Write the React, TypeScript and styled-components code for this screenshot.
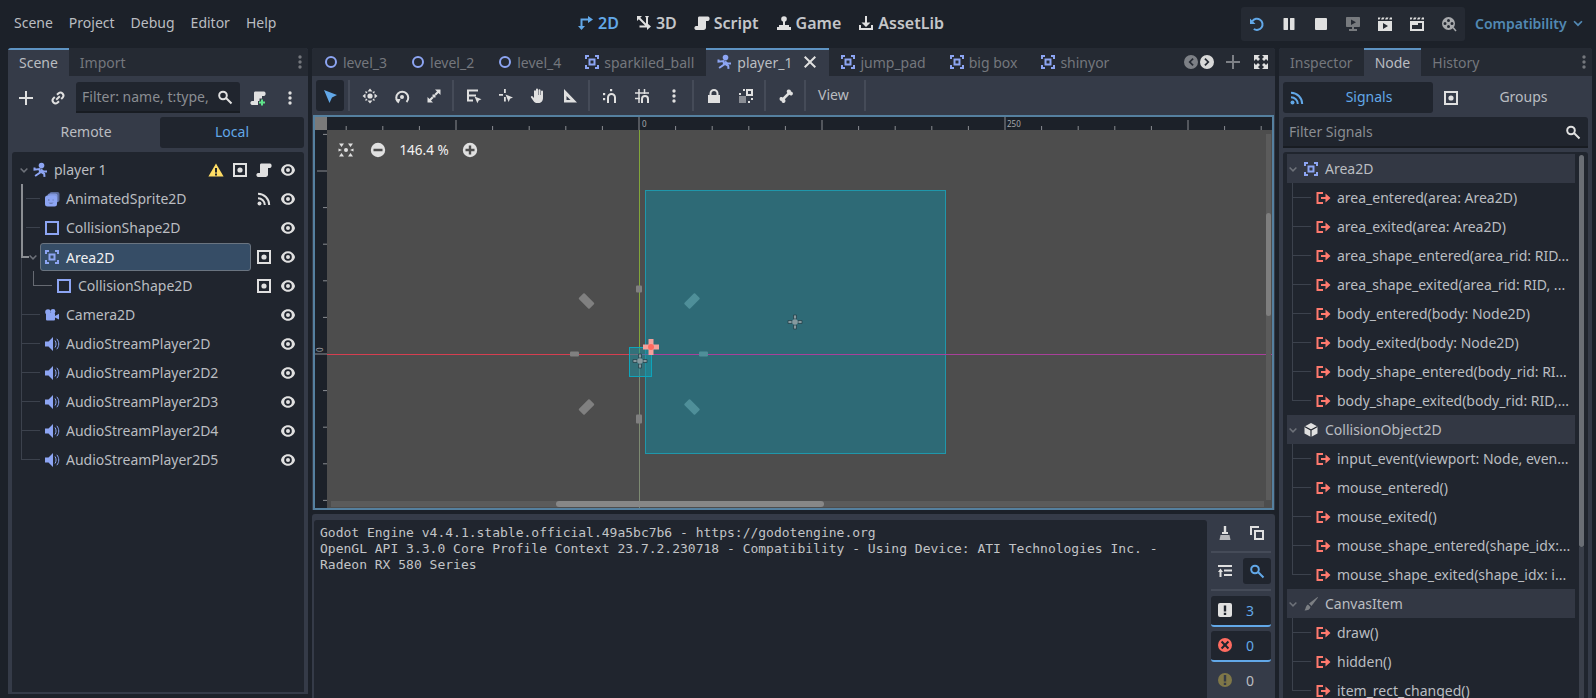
import * as React from 'react'
import styled, { createGlobalStyle } from 'styled-components'

const colors = {
  bg: '#1c2129',
  panel: '#353b48',
  tabBar: '#252a33',
  well: '#20252e',
  text: '#babdc1',
  textDim: '#74777d',
  accent: '#62a8e8',
  node: '#8da5f3',
  signal: '#ff7a6e',
  icon: '#e0e0e0',
}

const GlobalStyle = createGlobalStyle`
  html, body {
    margin: 0;
    padding: 0;
    background: ${colors.bg};
  }
  body {
    font-family: "Noto Sans", "Open Sans", sans-serif;
    font-size: 14px;
    color: ${colors.text};
  }
`

// ---- icons -------------------------------------------------------------

const glyphs: Record<string, React.ReactNode> = {
  eye: (
    <>
      <path fillRule="evenodd" d="M8 2.2C4.4 2.2 1.6 4.8 1 8c.6 3.2 3.4 5.8 7 5.8s6.4-2.6 7-5.8c-.6-3.2-3.4-5.8-7-5.8zm0 2a3.8 3.8 0 1 1 0 7.6 3.8 3.8 0 0 1 0-7.6z" />
      <circle cx="8" cy="8" r="2" />
    </>
  ),
  group: (
    <>
      <path fillRule="evenodd" d="M1 1h14v14H1zM3 3v10h10V3z" />
      <circle cx="8" cy="8" r="2.6" />
    </>
  ),
  script: <path d="M5.5 1.5H14c1 0 1.6 1 1.6 2.2S15 6 14 6h-2v6.5c0 1.5-1 2.5-2.5 2.5H2c-1 0-1.6-.9-1.6-1.9S1 11 2 11h2V3c0-1 .5-1.5 1.5-1.5z" />,
  scriptAdd: (
    <>
      <path d="M5.5 1.5H14c1 0 1.6 1 1.6 2.2S15 6 14 6h-2v2.5H9.5V11H8v4H2c-1 0-1.6-.9-1.6-1.9S1 11 2 11h2V3c0-1 .5-1.5 1.5-1.5z" />
      <path fill="#5fe38a" d="M11 9.5h2v2h2v2h-2v2h-2v-2H9v-2h2z" />
    </>
  ),
  warning: (
    <>
      <path fill="#ffdd65" d="M8 1.5 15.6 14.6H.4z" />
      <path fill="#20252e" d="M7 6h2v4.5H7zM7 11.4h2v2H7z" />
    </>
  ),
  player: (
    <>
      <circle cx="9.5" cy="3.6" r="2.8" />
      <path fill="none" stroke="currentColor" strokeWidth="2" d="M2.5 5.5v2.2L7.5 7l.6 3.5-5 3.5M8.2 9.5l4 2.3.3 3M9 7.5l2.5 2H15" />
    </>
  ),
  sprite: (
    <>
      <rect x="5.5" y="1" width="10" height="10" rx="2" opacity="0.55" />
      <rect x="3.5" y="2.5" width="10" height="10" rx="2" opacity="0.75" />
      <path fillRule="evenodd" d="M3.5 4.5h7a2.5 2.5 0 0 1 2.5 2.5v6a2.5 2.5 0 0 1-2.5 2.5h-7A2.5 2.5 0 0 1 1 13V7a2.5 2.5 0 0 1 2.5-2.5zM4 8v2h1.6V8zM8.4 8v2H10V8zM4.4 11.5c.6 1.4 4.6 1.4 5.2 0z" />
    </>
  ),
  camera: (
    <>
      <circle cx="4" cy="5" r="2.8" />
      <circle cx="9" cy="4.4" r="2.4" />
      <rect x="2" y="6" width="9" height="7.5" rx="1" />
      <path d="M11 9l4-2.2v5.6L11 10.6z" />
    </>
  ),
  speaker: (
    <>
      <path d="M1 5.5h3.5L9 1v14l-4.500-4.500H1z" />
      <path fill="none" stroke="currentColor" strokeWidth="1" d="M11 4.500c1.400 2 1.400 5 0 7M12.800 2.800c2.600 3 2.600 7.400 0 10.400" />
    </>
  ),
  area: <path fillRule="evenodd" d="M1 1h4v2H3v2H1zM11 1h4v4h-2V3h-2zM1 11h2v2h2v2H1zM13 11h2v4h-4v-2h2zM4.5 4.5h7v7h-7zM6.5 6.5v3h3v-3z" />,
  shape: <path fillRule="evenodd" d="M1 1h14v14H1zM3 3v10h10V3z" />,
  ring: <path fillRule="evenodd" d="M8 2a6 6 0 1 1 0 12A6 6 0 0 1 8 2zm0 2a4 4 0 1 0 0 8 4 4 0 0 0 0-8z" />,
  plus: <path d="M7 1h2v6h6v2H9v6H7V9H1V7h6z" />,
  close: <path d="M3.4 2 8 6.6 12.6 2 14 3.4 9.4 8l4.6 4.6-1.400 1.400L8 9.400 3.400 14 2 12.600 6.600 8 2 3.400z" />,
  link: <path fill="none" stroke="currentColor" strokeWidth="2" d="M6.200 9.800l3.600-3.600M7 4.800l1.600-1.600a3 3 0 0 1 4.200 4.200L11.200 9M9 11.200l-1.600 1.600a3 3 0 0 1-4.200-4.200L4.800 7" />,
  dots: (
    <>
      <circle cx="8" cy="3" r="1.700" />
      <circle cx="8" cy="8" r="1.700" />
      <circle cx="8" cy="13" r="1.700" />
    </>
  ),
  search: <path fill="none" stroke="currentColor" strokeWidth="2" d="M9.800 6.500a3.800 3.800 0 1 1-7.600 0 3.800 3.800 0 0 1 7.600 0zM9.500 9.500l5 5" />,
  chevron: <path fill="none" stroke="currentColor" strokeWidth="2" d="M3.500 6 8 10.500 12.500 6" />,
  rss: (
    <>
      <circle cx="3.500" cy="12.500" r="2" />
      <path fill="none" stroke="currentColor" strokeWidth="2" d="M2 7.200a6.800 6.800 0 0 1 6.800 6.800M2 2.800A11.200 11.200 0 0 1 13.200 14" />
    </>
  ),
  out: <path d="M1.500 2h6.500v2H3.500v8H8v2H1.500zM6 7h4.500V3.500L15.500 8l-5 4.500V9H6z" />,
  cube: (
    <>
      <path d="M8 1l6.500 3.500v7L8 15l-6.500-3.500v-7z" />
      <path fill="none" stroke="#20252e" strokeWidth="1.200" d="M1.500 4.500 8 8l6.500-3.500M8 8v7" />
    </>
  ),
  brush: (
    <>
      <path d="M14.500 1 15 1.500 8.500 10 6 7.500z" />
      <path d="M5 8.500 7.500 11c-.5 2.500-2.500 3.500-6 3.500 1.500-1.500 1-5 3.500-6z" />
    </>
  ),
  twoD: (
    <>
      <path fill="none" stroke="currentColor" strokeWidth="2" d="M3.500 12V4.500H11" />
      <path d="M10 1l5 3.500L10 8zM0 11h7l-3.500 4z" />
    </>
  ),
  threeD: (
    <>
      <path fill="none" stroke="currentColor" strokeWidth="2" d="M3 3l8.500 8.500M11 3v9M3.500 11.500H12" />
      <path d="M1 1h5L1 6zM15 11.500 11 15V8zM9 1h4l-2 3.500z" />
    </>
  ),
  game: (
    <>
      <circle cx="8" cy="4" r="2.800" />
      <path d="M7 5h2v5.500H7zM3 10h10v2H3zM1 12h14v3H1z" />
    </>
  ),
  asset: <path d="M7 1h2v6.500h3.500L8 12 3.500 7.500H7zM1 10h2v3h10v-3h2v5H1z" />,
  reload: (
    <>
      <path fill="none" stroke="currentColor" strokeWidth="2" d="M4.800 13a5.600 5.600 0 1 0-1.500-7.800" />
      <path d="M1 2.500v5.500h5.500z" />
    </>
  ),
  pause: <path d="M3 2h3.500c.300 0 .5.200.5.5v11c0 .300-.2.5-.5.5H3c-.3 0-.5-.2-.5-.5v-11c0-.3.200-.5.500-.5zM9.500 2H13c.300 0 .5.200.5.5v11c0 .300-.2.5-.5.5H9.500c-.3 0-.5-.2-.5-.5v-11c0-.3.200-.5.500-.5z" />,
  stop: <rect x="2" y="2" width="12" height="12" rx="1" />,
  monitor: <path fillRule="evenodd" d="M2 1h12c.6 0 1 .4 1 1v8c0 .6-.4 1-1 1H9v2h3v2H4v-2h3v-2H2c-.6 0-1-.4-1-1V2c0-.6.400-1 1-1zm4 2.500v5.500l5-2.700z" />,
  clapPlay: <path fillRule="evenodd" d="M1 1.500h2.500l-1 2H1zM5 1.500h2.500l-1 2H4zM9 1.500h2.500l-1 2H8zM13 1.500h2v2h-2.800zM1 5h14v10H1zm5 2v6l5-3z" />,
  clap: <path fillRule="evenodd" d="M1 1.500h2.500l-1 2H1zM5 1.500h2.500l-1 2H4zM9 1.500h2.500l-1 2H8zM13 1.500h2v2h-2.800zM1 5h14v10H1zm2 2v6h10V7H9v2H3z" />,
  reel: (
    <>
      <path fillRule="evenodd" d="M7.500 1a6.500 6.500 0 1 1 0 13 6.500 6.500 0 0 1 0-13zM7.500 3a1.500 1.500 0 1 0 0 3 1.500 1.500 0 0 0 0-3zM4 6a1.500 1.500 0 1 0 0 3 1.500 1.500 0 0 0 0-3zM11 6a1.500 1.500 0 1 0 0 3 1.500 1.500 0 0 0 0-3zM7.500 9a1.500 1.500 0 1 0 0 3 1.500 1.500 0 0 0 0-3z" />
      <path fill="none" stroke="currentColor" strokeWidth="1.500" d="M12 11.500l3 3.500" />
    </>
  ),
  select: <path d="M2 2l13 5-5 2.500L7.500 15z" />,
  move: (
    <>
      <circle cx="8" cy="8" r="2.600" />
      <path d="M8 .5 10.500 3.500h-5zM8 15.500 5.500 12.500h5zM.5 8l3-2.500v5zM15.500 8l-3 2.500v-5z" />
      <path fill="none" stroke="currentColor" strokeWidth="1.400" d="M3.500 3.500l1.500 1.500M12.500 3.500 11 5M3.500 12.500 5 11M12.500 12.500 11 11" />
    </>
  ),
  rotate: (
    <>
      <path fill="none" stroke="currentColor" strokeWidth="2" d="M4 14a6 6 0 1 1 8.500 0" />
      <circle cx="8" cy="9" r="2" />
      <path d="M1.500 11h5l-2 4.500z" />
    </>
  ),
  scale: (
    <>
      <path d="M9 1.500h5.500V7l-2-2L10 7.500 8.500 6 11 3.500zM7 14.500H1.500V9l2 2L6 8.500 7.500 10 5 12.500z" />
      <rect x="6.500" y="6.500" width="3" height="3" />
    </>
  ),
  listSelect: (
    <>
      <path d="M1 1.500h11v2H3v3h7v2H3v3h4v2H1z" />
      <path d="M8.500 8.500l7 2.800-2.800 1.200-1.300 2.800z" />
    </>
  ),
  pick: (
    <>
      <path d="M1 6h4v1.800H1zM6 1h1.800v4H6zM6 9h1.800v4.500H6z" />
      <path d="M7.500 6.500l7.500 3-3 1.300-1.300 3.200z" />
    </>
  ),
  hand: <path d="M6 1.500a1 1 0 0 1 2 0V7h.5V2.200a1 1 0 0 1 2 0V7h.5V3.500a1 1 0 0 1 2 0V10c0 3-2 5-4.500 5H7c-1.500 0-2.500-.6-3.500-2L1 9.500c-.6-.9.800-2 1.600-1L4 10V3.200a1 1 0 0 1 2 0z" />,
  ruler: <path fillRule="evenodd" d="M2 1l13 13.500H2zM4.500 8v4h4z" />,
  snap: (
    <>
      <path fill="none" stroke="currentColor" strokeWidth="2" d="M6 15V9.500a3.500 3.500 0 0 1 7 0V15" />
      <rect x="1" y="5" width="2.200" height="2.200" />
      <rect x="1" y="10" width="2.200" height="2.200" />
      <rect x="8" y="1" width="2.200" height="2.200" />
    </>
  ),
  grid: (
    <>
      <path fill="none" stroke="currentColor" strokeWidth="1.500" d="M1 5h14M1 10.500h5M5 1v14M10.500 1v5" />
      <path fill="none" stroke="currentColor" strokeWidth="2" d="M8 15v-4a3 3 0 0 1 6 0v4" />
    </>
  ),
  lock: <path fillRule="evenodd" d="M8 1a4.500 4.500 0 0 1 4.500 4.500V7H14v8H2V7h1.500V5.500A4.500 4.500 0 0 1 8 1zm0 2a2.500 2.500 0 0 0-2.500 2.500V7h5V5.500A2.500 2.500 0 0 0 8 3z" />,
  checker: (
    <>
      <path d="M1 8h7v7H1z" opacity="0.5" />
      <path d="M8 1h7v7H8zm2 2v3h3V3z" fillRule="evenodd" />
      <path d="M1 5h2v2H1zM5 1h2v2H5zM10 13h2v2h-2zM13 10h2v2h-2z" />
    </>
  ),
  bone: <path d="M11 1.500a2 2 0 0 1 2 2 2 2 0 0 1 1 3.700c-.9.500-2 .3-2.700-.4L6.800 11.300c.7.700.9 1.800.4 2.700A2 2 0 0 1 3.500 13a2 2 0 0 1-2-2 2 2 0 0 1 3.300-1.600L9.300 4.900A2 2 0 0 1 11 1.500z" />,
  center: (
    <>
      <circle cx="8" cy="8" r="2" />
      <path d="M1 1.500h5L3.500 5zM15 1.500h-5L12.500 5zM1 14.500h5L3.500 11zM15 14.500h-5l2.500-3.500zM.5 6.500 4 8 .5 9.500zM15.500 6.500 12 8l3.500 1.500z" />
    </>
  ),
  zoomOut: <path fillRule="evenodd" d="M8 .8a7.200 7.200 0 1 1 0 14.400A7.200 7.200 0 0 1 8 .8zM3.500 6.800v2.400h9V6.800z" />,
  zoomIn: <path fillRule="evenodd" d="M8 .8a7.200 7.200 0 1 1 0 14.400A7.200 7.200 0 0 1 8 .8zM6.800 3.500v3.300H3.500v2.400h3.300v3.300h2.400V9.200h3.300V6.800H9.200V3.500z" />,
  expand: <path d="M1 1h6L5 3l2 2-2 2-2-2-2 2zM15 1v6l-2-2-2 2-2-2 2-2-2-2zM1 15V9l2 2 2-2 2 2-2 2 2 2zM15 15H9l2-2-2-2 2-2 2 2 2-2z" />,
  prevTab: <path fillRule="evenodd" d="M8 1a7 7 0 1 1 0 14A7 7 0 0 1 8 1zm1.500 3L5.500 8l4 4 1.200-1.200L7.900 8l2.800-2.800z" />,
  nextTab: <path fillRule="evenodd" d="M8 1a7 7 0 1 1 0 14A7 7 0 0 1 8 1zM6.500 4 5.300 5.200 8.100 8l-2.800 2.800L6.500 12l4-4z" />,
  broom: (
    <>
      <path d="M6.800 1h2.400v6H6.800z" />
      <path d="M5 7h6v2H5z" />
      <path d="M3.500 10h9l1 5h-11z" opacity="0.75" />
    </>
  ),
  copy: <path fillRule="evenodd" d="M1 1h9v2H3v7H1zM5 5h10v10H5zM7 7v6h6V7z" />,
  collapse: <path d="M1 2h14v2H1zM7 6.500h8v2H7zM7 11h8v2H7zM3.500 5.500 6 9H4.500v5h-2V9H1z" />,
  message: (
    <>
      <rect x="1" y="1" width="14" height="14" rx="2" />
      <path fill="#20252e" d="M6.800 3.500h2.400v6H6.800zM6.800 10.700h2.400V13H6.800z" />
    </>
  ),
  error: (
    <>
      <circle cx="8" cy="8" r="7" fill="#ff6b60" />
      <path fill="#20252e" d="M5.300 3.800 8 6.500l2.700-2.700 1.500 1.500L9.500 8l2.700 2.700-1.500 1.500L8 9.500l-2.700 2.700-1.500-1.500L6.500 8 3.800 5.300z" />
    </>
  ),
  caution: (
    <>
      <circle cx="8" cy="8" r="7" fill="#7f7748" />
      <path fill="#353b48" d="M6.800 3h2.400v6.500H6.800zM6.800 10.700h2.400V13H6.800z" />
    </>
  ),
}

const IconSvg = styled.svg<{ $color?: string; $size?: number }>`
  width: ${(p) => p.$size ?? 16}px;
  height: ${(p) => p.$size ?? 16}px;
  flex: none;
  display: block;
  fill: currentColor;
  color: ${(p) => p.$color ?? colors.icon};
`

const Icon = (props: { name: string; color?: string; size?: number }) => (
  <IconSvg viewBox="0 0 16 16" $color={props.color} $size={props.size}>
    {glyphs[props.name]}
  </IconSvg>
)

// ---- top bar -----------------------------------------------------------

const Root = styled.div`
  width: 1596px;
  height: 698px;
  overflow: hidden;
  display: flex;
  flex-direction: column;
`

const TopBar = styled.header`
  height: 48px;
  flex: none;
  display: grid;
  grid-template-columns: 578px 663px 224px 1fr;
  align-items: center;
`

const MenuList = styled.nav`
  display: flex;
  gap: 16px;
  padding: 0 0 3px 14px;
`

const Workspaces = styled.nav`
  display: flex;
  gap: 17px;
  padding-bottom: 3px;
`

const Workspace = styled.span<{ $active?: boolean }>`
  display: flex;
  align-items: center;
  gap: 4px;
  font-size: 16px;
  font-weight: 600;
  color: ${(p) => (p.$active ? colors.accent : '#c4c6c9')};
`

const RunBar = styled.div`
  height: 34px;
  display: flex;
  align-items: center;
  justify-content: space-between;
  padding: 0 8px;
  box-sizing: border-box;
  background: ${colors.tabBar};
  border-radius: 3px;
`

const Renderer = styled.span`
  display: flex;
  align-items: center;
  gap: 4px;
  padding: 0 0 2px 10px;
  font-weight: 600;
  color: #5289b3;
`

// ---- docks and tabs ----------------------------------------------------

const Main = styled.main`
  flex: 1;
  min-height: 0;
  display: flex;
  gap: 4px;
  padding: 0 4px 0 8px;
`

const Dock = styled.section<{ $width: number; $gapBelow?: number }>`
  width: ${(p) => p.$width}px;
  flex: none;
  display: flex;
  flex-direction: column;
  background: ${colors.panel};
  border-radius: 3px 3px 0 0;
  margin-bottom: ${(p) => p.$gapBelow ?? 0}px;
  overflow: hidden;
`

const TabBar = styled.div`
  height: 28px;
  flex: none;
  display: flex;
  align-items: stretch;
  background: ${colors.tabBar};
`

const DockTab = styled.span<{ $active?: boolean }>`
  display: flex;
  align-items: center;
  padding: 0 11px 2px;
  box-sizing: border-box;
  border-top: 2px solid ${(p) => (p.$active ? '#5e93c2' : 'transparent')};
  background: ${(p) => (p.$active ? colors.panel : 'transparent')};
  color: ${(p) => (p.$active ? colors.text : colors.textDim)};
`

const TabMenu = styled.span`
  margin-left: auto;
  display: flex;
  align-items: center;
`

const DockToolbar = styled.div`
  height: 31px;
  margin-top: 6px;
  flex: none;
  display: flex;
  align-items: center;
  padding-left: 2px;
`

const Slot = styled.span`
  width: 32px;
  display: flex;
  justify-content: center;
  flex: none;
`

const FilterBox = styled.div<{ $grow?: boolean }>`
  height: 31px;
  box-sizing: border-box;
  display: flex;
  align-items: center;
  justify-content: space-between;
  padding: 0 7px 0 6px;
  background: ${colors.well};
  border-bottom: 2px solid #181c22;
  border-radius: 3px 3px 0 0;
  color: #8a8d92;
  white-space: nowrap;
  overflow: hidden;
  ${(p) => (p.$grow ? 'flex: 1;' : 'width: 164px; margin-left: 2px; margin-right: 2px;')}
`

const FilterRow = styled.div`
  margin: 4px 4px 0;
  display: flex;
  flex: none;
`

const SegmentRow = styled.div<{ $top?: number }>`
  height: 31px;
  margin: ${(p) => p.$top ?? 4}px 4px 0;
  flex: none;
  display: flex;
`

const Segment = styled.span<{ $active?: boolean; $width: number; $inset?: number }>`
  width: ${(p) => p.$width}px;
  flex: none;
  box-sizing: border-box;
  display: flex;
  align-items: center;
  padding-left: ${(p) => p.$inset ?? 0}px;
  border-radius: 3px;
  background: ${(p) => (p.$active ? colors.well : 'transparent')};
  color: ${(p) => (p.$active ? colors.accent : colors.text)};
`

const SegmentLabel = styled.span`
  flex: 1;
  text-align: center;
  padding-bottom: 2px;
`

const Well = styled.div<{ $bottom?: number; $inset?: number }>`
  flex: 1;
  min-height: 0;
  margin: 4px 4px ${(p) => p.$bottom ?? 0}px;
  padding: ${(p) => p.$inset ?? 3}px 0 0 4px;
  position: relative;
  background: ${colors.well};
  border-radius: 3px 3px 0 0;
  overflow: hidden;
`

// ---- tree rows ---------------------------------------------------------

const Row = styled.div`
  height: 29px;
  display: flex;
  align-items: stretch;
  white-space: nowrap;
`

const thin = '#3c424d'
const lit = '#8b8e93'
const elbow = '#666a72'
const bar = (c: string, x: number, y: number, w: number | string, h: number | string) =>
  `linear-gradient(${c}, ${c}) ${x}px ${y}px / ${typeof w === 'number' ? w + 'px' : w} ${typeof h === 'number' ? h + 'px' : h} no-repeat`

const guides: Record<string, string> = {
  lit: [bar(lit, 5, 0, 2, '100%'), bar(thin, 10, 14, 14, 1)].join(','),
  litEnd: [bar(lit, 5, 0, 2, 16), bar(lit, 5, 14, 8, 2), bar(thin, 5, 15, 1, 14)].join(','),
  thin: [bar(thin, 5, 0, 1, '100%'), bar(thin, 5, 14, 19, 1)].join(','),
  thinEnd: [bar(thin, 5, 0, 1, 15), bar(thin, 5, 14, 19, 1)].join(','),
  nested: [bar(thin, 5, 0, 1, '100%'), bar(elbow, 17, 0, 1, 15), bar(elbow, 17, 14, 19, 1)].join(','),
  none: 'none',
}

const Guide = styled.span<{ $kind: string; $width: number }>`
  width: ${(p) => p.$width}px;
  flex: none;
  display: flex;
  align-items: center;
  justify-content: flex-end;
  background: ${(p) => guides[p.$kind]};
`

const Fold = styled.span`
  width: 12px;
  flex: none;
  display: flex;
  justify-content: center;
  color: #6d7179;
`

const AreaFold = styled(Fold)`
  width: 14px;
`

const RootFold = styled(Fold)`
  width: 16px;
  align-items: center;
`

const RowLabel = styled.span<{ $selected?: boolean }>`
  min-width: 0;
  flex: 1;
  height: ${(p) => (p.$selected ? '26px' : 'auto')};
  margin: ${(p) => (p.$selected ? '1px 5px 0 0' : '0')};
  padding-left: ${(p) => (p.$selected ? '3px' : '0')};
  display: flex;
  align-items: center;
  gap: 6px;
  box-sizing: content-box;
  background: ${(p) => (p.$selected ? '#364d66' : 'transparent')};
  border: ${(p) => (p.$selected ? '1px solid #6a7480' : 'none')};
  border-radius: 3px;
  color: ${(p) => (p.$selected ? '#f0f1f2' : colors.text)};
`

const Trailing = styled.span`
  display: flex;
  align-items: center;
  gap: 8px;
  padding-right: 8px;
  flex: none;
`

const SectionRow = styled(Row)`
  width: 288px;
  background: #333844;
  align-items: center;
  gap: 4px;
`

const SectionName = styled.span`
  margin-left: 2px;
`

const SignalName = styled.span`
  margin-left: 6px;
  align-self: center;
`

const SlotIcon = styled.span`
  display: flex;
  align-items: center;
  flex: none;
`

const TreeScroll = styled.span`
  position: absolute;
  top: 3px;
  left: 296px;
  width: 5px;
  height: 392px;
  background: #6a6e75;
  border-radius: 3px;
`

const TrackLine = styled.span`
  position: absolute;
  top: 395px;
  left: 296px;
  width: 5px;
  height: 300px;
  background: #3a3f4a;
`

const sceneRows = [
  { guide: 'lit', icon: 'sprite', label: 'AnimatedSprite2D', extra: ['rss'] },
  { guide: 'lit', icon: 'shape', label: 'CollisionShape2D', extra: [] },
  { guide: 'litEnd', icon: 'area', label: 'Area2D', extra: ['group'], selected: true },
  { guide: 'nested', icon: 'shape', label: 'CollisionShape2D', extra: ['group'] },
  { guide: 'thin', icon: 'camera', label: 'Camera2D', extra: [] },
  { guide: 'thin', icon: 'speaker', label: 'AudioStreamPlayer2D', extra: [] },
  { guide: 'thin', icon: 'speaker', label: 'AudioStreamPlayer2D2', extra: [] },
  { guide: 'thin', icon: 'speaker', label: 'AudioStreamPlayer2D3', extra: [] },
  { guide: 'thin', icon: 'speaker', label: 'AudioStreamPlayer2D4', extra: [] },
  { guide: 'thinEnd', icon: 'speaker', label: 'AudioStreamPlayer2D5', extra: [] },
]

const signalGroups = [
  {
    name: 'Area2D',
    icon: 'area',
    color: colors.node,
    signals: [
      'area_entered(area: Area2D)',
      'area_exited(area: Area2D)',
      'area_shape_entered(area_rid: RID...',
      'area_shape_exited(area_rid: RID, ...',
      'body_entered(body: Node2D)',
      'body_exited(body: Node2D)',
      'body_shape_entered(body_rid: RI...',
      'body_shape_exited(body_rid: RID,...',
    ],
  },
  {
    name: 'CollisionObject2D',
    icon: 'cube',
    color: colors.icon,
    signals: [
      'input_event(viewport: Node, even...',
      'mouse_entered()',
      'mouse_exited()',
      'mouse_shape_entered(shape_idx:...',
      'mouse_shape_exited(shape_idx: i...',
    ],
  },
  {
    name: 'CanvasItem',
    icon: 'brush',
    color: '#7c7f84',
    signals: ['draw()', 'hidden()', 'item_rect_changed()'],
  },
]

const SceneTree = () => (
  <Well $bottom={2}>
    <Row>
      <RootFold>
        <Icon name="chevron" size={12} color="#6d7179" />
      </RootFold>
      <RowLabel>
        <Icon name="player" color={colors.node} />
        player 1
      </RowLabel>
      <Trailing>
        <Icon name="warning" />
        <Icon name="group" />
        <Icon name="script" />
        <Icon name="eye" />
      </Trailing>
    </Row>
    {sceneRows.map((row, index) => (
      <Row key={index}>
        <Guide
          $kind={row.guide}
          $width={row.guide === 'nested' ? 40 : row.guide === 'litEnd' ? 24 : 28}
        >
          {row.guide === 'litEnd' && (
            <AreaFold>
              <Icon name="chevron" size={12} color="#6d7179" />
            </AreaFold>
          )}
        </Guide>
        <RowLabel $selected={row.selected}>
          <Icon name={row.icon} color={colors.node} />
          {row.label}
        </RowLabel>
        <Trailing>
          {row.extra.map((name) => (
            <Icon key={name} name={name} />
          ))}
          <Icon name="eye" />
        </Trailing>
      </Row>
    ))}
  </Well>
)

const SignalTree = () => (
  <Well $inset={2}>
    {signalGroups.map((group) => (
      <React.Fragment key={group.name}>
        <SectionRow>
          <Fold>
            <Icon name="chevron" size={12} color="#6d7179" />
          </Fold>
          <Icon name={group.icon} color={group.color} />
          <SectionName>{group.name}</SectionName>
        </SectionRow>
        {group.signals.map((signal, index) => (
          <Row key={signal}>
            <Guide $kind={index === group.signals.length - 1 ? 'thinEnd' : 'thin'} $width={28} />
            <SlotIcon>
              <Icon name="out" color={colors.signal} />
            </SlotIcon>
            <SignalName>{signal}</SignalName>
          </Row>
        ))}
      </React.Fragment>
    ))}
    <TrackLine />
    <TreeScroll />
  </Well>
)

// ---- centre: scene tabs and toolbar ------------------------------------

const Center = styled.div`
  width: 963px;
  flex: none;
  display: flex;
  flex-direction: column;
  gap: 4px;
`

const EditorPane = styled.section`
  flex: none;
  display: flex;
  flex-direction: column;
  background: ${colors.panel};
  border-radius: 3px 3px 0 0;
`

const SceneTabs = styled(TabBar)`
  border-radius: 3px 3px 0 0;
`

const SceneTab = styled.span<{ $active?: boolean }>`
  display: flex;
  align-items: center;
  gap: ${(p) => (p.$active ? 5 : 4)}px;
  padding: 0 ${(p) => (p.$active ? 11 : 12)}px 2px ${(p) => (p.$active ? 10 : 11)}px;
  box-sizing: border-box;
  border-top: 2px solid ${(p) => (p.$active ? '#5e93c2' : 'transparent')};
  background: ${(p) => (p.$active ? colors.panel : 'transparent')};
  color: ${(p) => (p.$active ? colors.text : colors.textDim)};
`

const CloseIcon = styled.span`
  margin-left: 5px;
  display: flex;
`

const TabActions = styled.span`
  margin-left: auto;
  display: flex;
  align-items: center;
  padding-right: 6px;
`

const TabArrows = styled.span`
  display: flex;
  margin-right: 10px;
`

const ActionGap = styled.span`
  width: 12px;
`

const EditorToolbar = styled.div`
  height: 39px;
  display: flex;
  align-items: center;
  gap: 4px;
  padding-left: 4px;
  box-sizing: border-box;
`

const ToolButton = styled.span<{ $active?: boolean }>`
  width: 28px;
  height: 31px;
  flex: none;
  display: flex;
  align-items: center;
  justify-content: center;
  background: ${(p) => (p.$active ? colors.well : 'transparent')};
  border-radius: 3px;
`

const ToolSep = styled.span`
  width: 2px;
  height: 31px;
  flex: none;
  background: #454b58;
  margin-right: 2px;
`

const ViewLabel = styled.span`
  padding: 0 11px 2px 6px;
`

// ---- centre: viewport --------------------------------------------------

const Viewport = styled.div`
  height: 395px;
  margin: 0 1px;
  box-sizing: border-box;
  border: 2px solid #55809f;
  display: grid;
  grid-template-columns: 12px 1fr;
  grid-template-rows: 13px 1fr;
  background: #1c2129;
`

const RulerCorner = styled.div`
  background: #7a7a7a;
`

const RulerSvg = styled.svg`
  display: block;
  width: 100%;
  height: 100%;
  background: #1c2129;
`

const Canvas = styled.div`
  position: relative;
  overflow: hidden;
  background: #4d4d4d;
`

const SceneSvg = styled.svg`
  position: absolute;
  inset: 0;
  width: 100%;
  height: 100%;
`

const ZoomWidget = styled.div`
  position: absolute;
  left: 11px;
  top: 11px;
  display: flex;
  align-items: center;
  color: #f2f2f2;
  font-size: 13.5px;
`

const ZoomLabel = styled.span`
  width: 76px;
  text-align: center;
`

const ZoomCenter = styled.span`
  width: 32px;
  display: flex;
`

const ScrollTrackV = styled.div`
  position: absolute;
  top: 4px;
  right: 1px;
  bottom: 8px;
  width: 5px;
  background: #5b5b5b;
`

const ScrollGrabV = styled.div`
  position: absolute;
  top: 83px;
  right: 1px;
  height: 103px;
  width: 5px;
  border-radius: 3px;
  background: #7e7e7e;
`

const ScrollTrackH = styled.div`
  position: absolute;
  left: 4px;
  right: 8px;
  bottom: 1px;
  height: 6px;
  background: #5b5b5b;
`

const ScrollGrabH = styled.div`
  position: absolute;
  left: 229px;
  width: 268px;
  bottom: 1px;
  height: 6px;
  border-radius: 3px;
  background: #878787;
`

const STEP = 36.6
const ORIGIN_X = 639
const ORIGIN_Y = 354

const TopRuler = () => {
  const ticks = []
  for (let k = -8; k <= 17; k++) {
    const x = ORIGIN_X + k * STEP
    const height = k % 10 === 0 ? 13 : k % 5 === 0 ? 10 : 4
    ticks.push(<line key={k} x1={x} x2={x} y1={130 - height} y2={130} stroke="#8a8d92" strokeWidth="1" />)
  }
  return (
    <RulerSvg viewBox="327 117 945 13" preserveAspectRatio="none">
      {ticks}
      <text x="642" y="127" fontSize="8" fill="#a5a7ab" fontFamily="Noto Sans">0</text>
      <text x="1007" y="127" fontSize="8" fill="#a5a7ab" fontFamily="Noto Sans">250</text>
    </RulerSvg>
  )
}

const LeftRuler = () => {
  const ticks = []
  for (let k = -6; k <= 5; k++) {
    const y = ORIGIN_Y + k * STEP
    const width = k % 10 === 0 ? 12 : k % 5 === 0 ? 10 : 4
    ticks.push(<line key={k} x1={327 - width} x2={327} y1={y} y2={y} stroke="#8a8d92" strokeWidth="1" />)
  }
  return (
    <RulerSvg viewBox="315 130 12 378" preserveAspectRatio="none">
      {ticks}
      <text x="0" y="0" fontSize="8" fill="#a5a7ab" fontFamily="Noto Sans" transform="translate(323 352) rotate(-90)">0</text>
    </RulerSvg>
  )
}

const handles = [
  { x: 586.5, y: 301, w: 15, h: 8, r: 45, over: false },
  { x: 692, y: 301, w: 15, h: 8, r: -45, over: true },
  { x: 586.5, y: 407, w: 15, h: 8, r: -45, over: false },
  { x: 692, y: 407, w: 15, h: 8, r: 45, over: true },
  { x: 639, y: 289, w: 6, h: 7, r: 0, over: false },
  { x: 639, y: 419, w: 6, h: 9, r: 0, over: false },
  { x: 574.5, y: 354, w: 9, h: 5, r: 0, over: false },
  { x: 703.5, y: 354, w: 9, h: 5, r: 0, over: true },
]

const Crosshair = (props: { x: number; y: number }) => (
  <g transform={`translate(${props.x} ${props.y})`} fill="#86999e">
    <path d="M-1.500 -7h3v4h-3zM-1.500 3h3v4h-3zM-7 -1.500h4v3h-4zM3 -1.500h4v3h-4z" stroke="#24434b" strokeWidth="0.8" />
    <circle r="2.800" />
  </g>
)

const SceneDrawing = () => (
  <SceneSvg viewBox="327 130 945 378" preserveAspectRatio="none">
    <rect x="645.500" y="190.500" width="300" height="263" fill="#2e6a76" stroke="#1f97ab" />
    <line x1="639.500" x2="639.500" y1="130" y2="354" stroke="#82a63a" />
    <line x1="639.500" x2="639.500" y1="354" y2="508" stroke="#7d8a72" />
    <line x1="327" x2="639" y1="354.500" y2="354.500" stroke="#d63e50" />
    <line x1="639" x2="1272" y1="354.500" y2="354.500" stroke="#a8409a" />
    <rect x="629.500" y="347.500" width="22" height="29" fill="#1d8fa0" fillOpacity="0.55" stroke="#0ea5bb" />
    {handles.map((h, i) => (
      <rect
        key={i}
        x={h.x - h.w / 2}
        y={h.y - h.h / 2}
        width={h.w}
        height={h.h}
        rx="1"
        fill={h.over ? '#4f8f99' : '#808080'}
        transform={`rotate(${h.r} ${h.x} ${h.y})`}
      />
    ))}
    <Crosshair x={640} y={361} />
    <Crosshair x={795} y={322} />
    <g transform="translate(651 347)">
      <path d="M-2.500 -8h5v5.500H8v5H2.500V8h-5V2.500H-8v-5h5.500z" fill="#f5a09a" />
      <circle r="3" fill="#ff6a60" />
    </g>
  </SceneSvg>
)

// ---- centre: output panel ----------------------------------------------

const OutputPane = styled.section`
  flex: 1;
  min-height: 0;
  display: flex;
  background: ${colors.panel};
  border-radius: 3px 3px 0 0;
  overflow: hidden;
`

const Log = styled.pre`
  width: 893px;
  margin: 6px 0 0 2px;
  padding: 5px 6px;
  box-sizing: border-box;
  flex: none;
  background: ${colors.well};
  border-radius: 3px 3px 0 0;
  font-family: "DejaVu Sans Mono", "Liberation Mono", monospace;
  font-size: 13px;
  line-height: 16px;
  color: #c2c4c7;
`

const LogSide = styled.div`
  flex: 1;
  padding: 6px 4px 0;
  display: flex;
  flex-direction: column;
`

const SideRow = styled.div`
  height: 26px;
  flex: none;
  display: flex;
  gap: 4px;
`

const SideButton = styled.span<{ $active?: boolean }>`
  width: 28px;
  display: flex;
  align-items: center;
  justify-content: center;
  background: ${(p) => (p.$active ? colors.well : 'transparent')};
  border-radius: 3px;
`

const SideSep = styled.div`
  height: 2px;
  margin: 5px 0;
  flex: none;
  background: #454b58;
`

const CountButton = styled.span<{ $on?: boolean }>`
  height: 31px;
  margin-bottom: 4px;
  flex: none;
  box-sizing: border-box;
  display: flex;
  align-items: center;
  padding: 0 0 1px 6px;
  gap: 13px;
  background: ${(p) => (p.$on ? colors.well : 'transparent')};
  border-bottom: 2px solid ${(p) => (p.$on ? '#62a8e8' : 'transparent')};
  border-radius: 3px;
  color: ${(p) => (p.$on ? colors.accent : colors.text)};
`

// ---- page --------------------------------------------------------------

const sceneTabs = [
  { icon: 'ring', label: 'level_3' },
  { icon: 'ring', label: 'level_2' },
  { icon: 'ring', label: 'level_4' },
  { icon: 'area', label: 'sparkiled_ball' },
  { icon: 'player', label: 'player_1', active: true },
  { icon: 'area', label: 'jump_pad' },
  { icon: 'area', label: 'big box' },
  { icon: 'area', label: 'shinyor' },
]

const App = () => (
  <Root>
    <GlobalStyle />
    <TopBar>
      <MenuList>
        {['Scene', 'Project', 'Debug', 'Editor', 'Help'].map((item) => (
          <span key={item}>{item}</span>
        ))}
      </MenuList>
      <Workspaces>
        <Workspace $active>
          <Icon name="twoD" color={colors.accent} />
          2D
        </Workspace>
        <Workspace>
          <Icon name="threeD" />
          3D
        </Workspace>
        <Workspace>
          <Icon name="script" />
          Script
        </Workspace>
        <Workspace>
          <Icon name="game" />
          Game
        </Workspace>
        <Workspace>
          <Icon name="asset" />
          AssetLib
        </Workspace>
      </Workspaces>
      <RunBar>
        <Icon name="reload" color={colors.accent} />
        <Icon name="pause" />
        <Icon name="stop" />
        <Icon name="monitor" color="#777a7e" />
        <Icon name="clapPlay" />
        <Icon name="clap" />
        <Icon name="reel" color="#a8aaad" />
      </RunBar>
      <Renderer>
        Compatibility
        <Icon name="chevron" size={14} color="#5289b3" />
      </Renderer>
    </TopBar>

    <Main>
      <Dock $width={300} $gapBelow={4}>
        <TabBar>
          <DockTab $active>Scene</DockTab>
          <DockTab>Import</DockTab>
          <TabMenu>
            <Icon name="dots" color="#74777d" />
          </TabMenu>
        </TabBar>
        <DockToolbar>
          <Slot>
            <Icon name="plus" />
          </Slot>
          <Slot>
            <Icon name="link" />
          </Slot>
          <FilterBox>
            Filter: name, t:type,
            <Icon name="search" />
          </FilterBox>
          <Slot>
            <Icon name="scriptAdd" />
          </Slot>
          <Slot>
            <Icon name="dots" />
          </Slot>
        </DockToolbar>
        <SegmentRow>
          <Segment $width={148}>
            <SegmentLabel>Remote</SegmentLabel>
          </Segment>
          <Segment $width={144} $active>
            <SegmentLabel>Local</SegmentLabel>
          </Segment>
        </SegmentRow>
        <SceneTree />
      </Dock>

      <Center>
        <EditorPane>
          <SceneTabs>
            {sceneTabs.map((tab) => (
              <SceneTab key={tab.label} $active={tab.active}>
                <Icon name={tab.icon} color={colors.node} />
                {tab.label}
                {tab.active && (
                  <CloseIcon>
                    <Icon name="close" />
                  </CloseIcon>
                )}
              </SceneTab>
            ))}
            <TabActions>
              <TabArrows>
                <Icon name="prevTab" color="#7d8086" />
                <Icon name="nextTab" color="#d8d8d8" />
              </TabArrows>
              <Icon name="plus" color="#7d8086" />
              <ActionGap />
              <Icon name="expand" />
            </TabActions>
          </SceneTabs>
          <EditorToolbar>
            <ToolButton $active>
              <Icon name="select" color={colors.accent} />
            </ToolButton>
            <ToolSep />
            <ToolButton>
              <Icon name="move" />
            </ToolButton>
            <ToolButton>
              <Icon name="rotate" />
            </ToolButton>
            <ToolButton>
              <Icon name="scale" />
            </ToolButton>
            <ToolSep />
            <ToolButton>
              <Icon name="listSelect" />
            </ToolButton>
            <ToolButton>
              <Icon name="pick" />
            </ToolButton>
            <ToolButton>
              <Icon name="hand" />
            </ToolButton>
            <ToolButton>
              <Icon name="ruler" />
            </ToolButton>
            <ToolSep />
            <ToolButton>
              <Icon name="snap" />
            </ToolButton>
            <ToolButton>
              <Icon name="grid" />
            </ToolButton>
            <ToolButton>
              <Icon name="dots" />
            </ToolButton>
            <ToolSep />
            <ToolButton>
              <Icon name="lock" />
            </ToolButton>
            <ToolButton>
              <Icon name="checker" />
            </ToolButton>
            <ToolSep />
            <ToolButton>
              <Icon name="bone" />
            </ToolButton>
            <ToolSep />
            <ViewLabel>View</ViewLabel>
            <ToolSep />
          </EditorToolbar>
          <Viewport>
            <RulerCorner />
            <TopRuler />
            <LeftRuler />
            <Canvas>
              <SceneDrawing />
              <ScrollTrackV />
              <ScrollGrabV />
              <ScrollTrackH />
              <ScrollGrabH />
              <ZoomWidget>
                <ZoomCenter>
                  <Icon name="center" />
                </ZoomCenter>
                <Icon name="zoomOut" />
                <ZoomLabel>146.4 %</ZoomLabel>
                <Icon name="zoomIn" />
              </ZoomWidget>
            </Canvas>
          </Viewport>
        </EditorPane>

        <OutputPane>
          <Log>
            {'Godot Engine v4.4.1.stable.official.49a5bc7b6 - https://godotengine.org\n'}
            {'OpenGL API 3.3.0 Core Profile Context 23.7.2.230718 - Compatibility - Using Device: ATI Technologies Inc. -\n'}
            {'Radeon RX 580 Series'}
          </Log>
          <LogSide>
            <SideRow>
              <SideButton>
                <Icon name="broom" />
              </SideButton>
              <SideButton>
                <Icon name="copy" />
              </SideButton>
            </SideRow>
            <SideSep />
            <SideRow>
              <SideButton>
                <Icon name="collapse" />
              </SideButton>
              <SideButton $active>
                <Icon name="search" color={colors.accent} />
              </SideButton>
            </SideRow>
            <SideSep />
            <CountButton $on>
              <Icon name="message" />3
            </CountButton>
            <CountButton $on>
              <Icon name="error" />0
            </CountButton>
            <CountButton>
              <Icon name="caution" />0
            </CountButton>
          </LogSide>
        </OutputPane>
      </Center>

      <Dock $width={313}>
        <TabBar>
          <DockTab>Inspector</DockTab>
          <DockTab $active>Node</DockTab>
          <DockTab>History</DockTab>
          <TabMenu>
            <Icon name="dots" color="#74777d" />
          </TabMenu>
        </TabBar>
        <SegmentRow $top={6}>
          <Segment $width={150} $active $inset={6}>
            <Icon name="rss" color={colors.accent} />
            <SegmentLabel>Signals</SegmentLabel>
          </Segment>
          <Segment $width={155} $inset={10}>
            <Icon name="group" />
            <SegmentLabel>Groups</SegmentLabel>
          </Segment>
        </SegmentRow>
        <FilterRow>
          <FilterBox $grow>
            Filter Signals
            <Icon name="search" />
          </FilterBox>
        </FilterRow>
        <SignalTree />
      </Dock>
    </Main>
  </Root>
)

export default App
